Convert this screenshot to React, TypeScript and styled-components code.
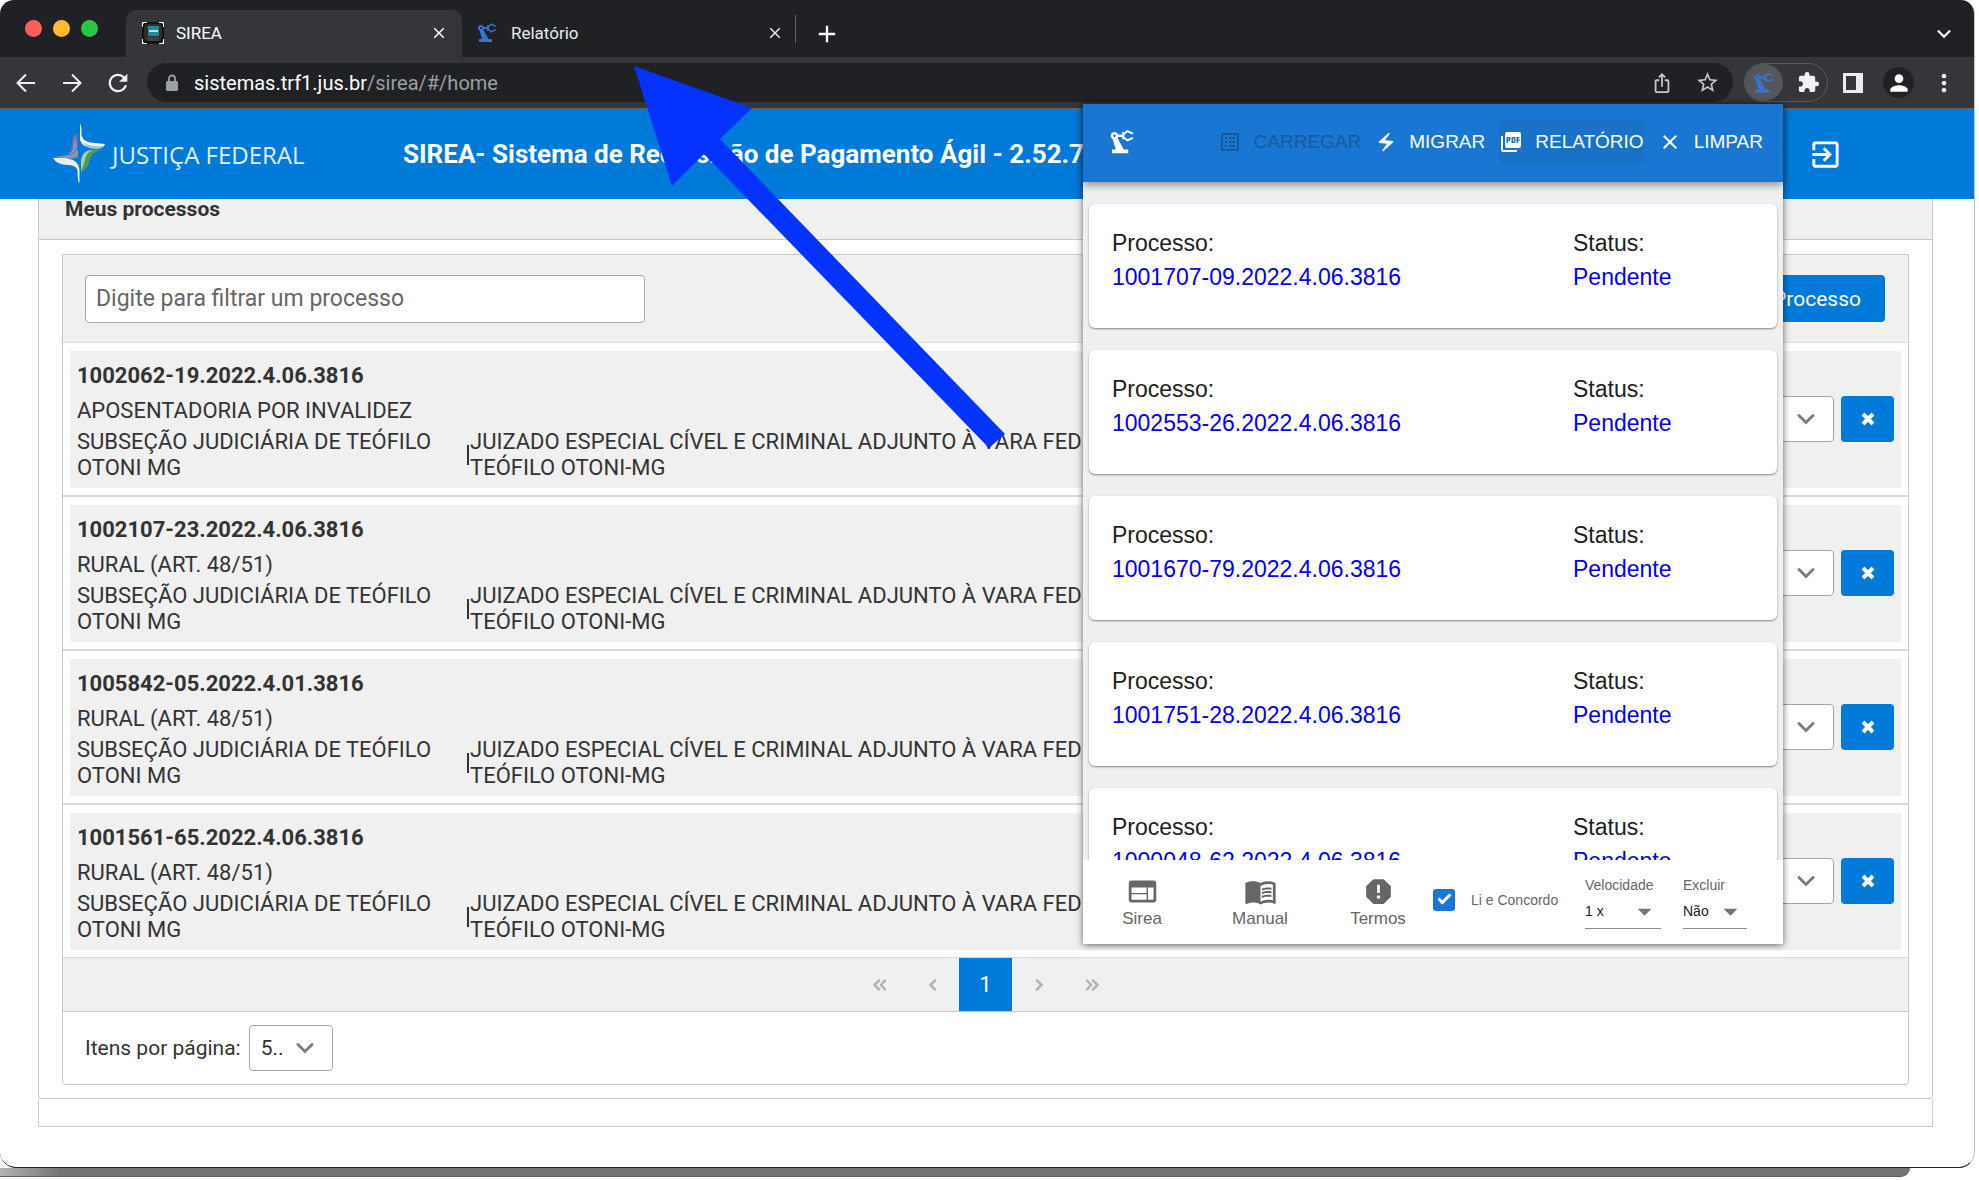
import React from "react";
import styled, { createGlobalStyle } from "styled-components";
import {
  MdRefresh,
  MdIosShare,
  MdStarBorder,
  MdPrecisionManufacturing,
  MdExtension,
  MdPerson,
  MdMoreVert,
  MdClose,
  MdAdd,
  MdExitToApp,
  MdListAlt,
  MdElectricBolt,
  MdPictureAsPdf,
  MdWeb,
  MdMenuBook,
  MdReport,
  MdArrowDropDown,
} from "react-icons/md";

const GlobalStyle = createGlobalStyle`
  *, *::before, *::after { box-sizing: border-box; }
  body { margin: 0; background: #fff; font-family: Roboto, "Liberation Sans", sans-serif; }
  button, input, select { font: inherit; color: inherit; margin: 0; }
  button { border: 0; padding: 0; background: none; cursor: pointer; }
  h1, h2, h3, p { margin: 0; font: inherit; }
  svg { display: block; flex: none; }
`;

/* ---------- browser window ---------- */

const Desktop = styled.div`
  overflow: hidden;
  padding-bottom: 4px;
`;

const Window = styled.div`
  position: relative;
  margin-right: 4px;
  border-right: 1px solid #c4c4c4;
  border-bottom: 1px solid #222;
  border-radius: 14px 14px 16px 16px;
  background: #fff;
  overflow: hidden;
`;

const WindowShadow = styled.div`
  height: 9px;
  margin-right: 69px;
  border-radius: 0 0 16px 0;
  background: linear-gradient(90deg, #b4b4b4 0, #747474 60px);
  border-bottom: 1px solid #5c5c5c;
`;

const TabStrip = styled.div`
  display: flex;
  align-items: flex-end;
  height: 57px;
  background: #202124;
  color: #fff;
`;

const TrafficLights = styled.div`
  display: flex;
  align-self: center;
  gap: 11px;
  width: 126px;
  padding-left: 25px;
`;

const Light = styled.span<{ $color: string }>`
  width: 17px;
  height: 17px;
  border-radius: 50%;
  background: ${(p) => p.$color};
`;

const Tab = styled.div<{ $active?: boolean }>`
  display: flex;
  align-items: center;
  gap: 12px;
  width: 336px;
  height: 47px;
  padding: 0 14px 1px ${(p) => (p.$active ? 16 : 13)}px;
  border-radius: 10px 10px 0 0;
  background: ${(p) => (p.$active ? "#35363a" : "transparent")};
  font-size: 17px;
  color: ${(p) => (p.$active ? "#fff" : "#e8eaed")};
`;

const TabTitle = styled.span`
  flex: 1;
`;

const TabDivider = styled.span`
  align-self: center;
  width: 1px;
  height: 28px;
  margin-left: -3px;
  background: #5f6165;
`;

const StripButton = styled.button<{ $push?: boolean }>`
  display: flex;
  align-items: center;
  justify-content: center;
  width: 34px;
  height: 47px;
  margin-left: ${(p) => (p.$push ? "auto" : "14px")};
  margin-right: 13px;
`;

const Toolbar = styled.div`
  display: flex;
  align-items: center;
  height: 52px;
  padding: 0 20px 0 9px;
  background: #35363a;
  border-bottom: 1px solid #626262;
  color: #f1f1f1;
`;

const NavButton = styled.button`
  display: flex;
  align-items: center;
  justify-content: center;
  width: 34px;
  height: 34px;
  margin-right: 12px;
`;

const Omnibox = styled.div`
  display: flex;
  flex: 1;
  align-items: center;
  gap: 8px;
  height: 39px;
  padding: 0 12px 0 16px;
  border-radius: 20px;
  background: #202124;
  color: #9aa0a6;
  font-size: 20px;
`;

const Url = styled.span`
  flex: 1;
  margin-left: 5px;
  b {
    font-weight: 400;
    color: #fff;
  }
`;

const OmniAction = styled.button`
  display: flex;
  justify-content: center;
  width: 28px;
  margin-left: 9px;
  color: #c4c6c9;
`;

const ExtensionPill = styled.div`
  display: flex;
  align-items: center;
  width: 84px;
  height: 39px;
  margin-left: 11px;
  border: 1px solid #5a5b5e;
  border-radius: 20px;
`;

const ExtensionActive = styled.button`
  display: flex;
  align-items: center;
  justify-content: center;
  width: 38px;
  height: 37px;
  margin-right: 14px;
  border-radius: 50%;
  background: #55565a;
  color: #3874cb;
`;

const BarButtons = styled.div`
  display: flex;
  align-items: center;
  gap: 20px;
  margin-left: 15px;
`;

const BarButton = styled.button`
  display: flex;
  align-items: center;
  justify-content: center;
  width: 20px;
  height: 31px;
`;

const Avatar = styled(BarButton)`
  width: 31px;
  border-radius: 50%;
  background: #202124;
  color: #fff;
`;

/* ---------- SIREA page ---------- */

const AppHeader = styled.header`
  display: flex;
  align-items: center;
  height: 90px;
  padding: 0 131px 0 53px;
  background: #007ad9;
  color: #fff;
`;

const Brand = styled.div`
  display: flex;
  align-items: center;
  gap: 7px;
  width: 350px;
  font-family: "Open Sans", "Noto Sans", sans-serif;
  font-size: 24px;
  white-space: nowrap;
  color: #e3effb;
`;

const AppTitle = styled.h1`
  flex: 1;
  font-size: 26px;
  font-weight: 700;
  white-space: nowrap;
`;

const Content = styled.main`
  padding: 0 41px 40px 38px;
  color: #333;
  font-size: 22px;
  line-height: 26px;
`;

const Panel = styled.section`
  padding-bottom: 13px;
  border: 1px solid #c8c8c8;
  border-top: 0;
  border-radius: 0 0 4px 4px;
`;

const PanelTitle = styled.h2`
  height: 41px;
  padding-left: 26px;
  border-bottom: 1px solid #c8c8c8;
  background: #f0f0f0;
  font-size: 21px;
  font-weight: 700;
  line-height: 20px;
`;

const DataView = styled.div`
  margin: 14px 23px 0;
  border: 1px solid #c8c8c8;
  border-radius: 0 0 4px 4px;
`;

const DataHeader = styled.div`
  display: flex;
  align-items: center;
  justify-content: space-between;
  height: 88px;
  padding: 0 23px 0 22px;
  border-bottom: 1px solid #dadde8;
  background: #f0f0f0;
`;

const FilterInput = styled.input`
  width: 560px;
  height: 48px;
  padding: 0 10px;
  border: 1px solid #a6a6a6;
  border-radius: 4px;
  background: #fff;
  font-size: 23px;
  &::placeholder {
    color: #666;
    opacity: 1;
  }
`;

const PrimaryButton = styled.button`
  height: 47px;
  padding: 0 24px;
  border-radius: 4px;
  background: #007ad9;
  color: #fff;
  font-size: 21px;
`;

const RowFrame = styled.div`
  padding: 8px 7px 7px;
  border-bottom: 1px solid #d6dae4;
  & + & {
    border-top: 1px solid #d6dae4;
  }
`;

const Row = styled.article`
  display: flex;
  align-items: center;
  justify-content: space-between;
  height: 137px;
  padding: 4px 7px 0;
  background: #f0f0f0;
`;

const RowNumber = styled.h3`
  font-weight: 700;
  margin-bottom: 9px;
`;

const RowSubject = styled.p`
  margin-bottom: 5px;
`;

const RowPlace = styled.div`
  display: flex;
  align-items: center;
`;

const Section = styled.p`
  width: 387px;
`;

const Bar = styled.span`
  width: 2px;
  height: 20px;
  margin: 0 1px 0 3px;
  background: #333;
`;

const Court = styled.p`
  width: 780px;
`;

const RowActions = styled.div`
  display: flex;
  gap: 7px;
  padding-bottom: 6px;
`;

const SelectBox = styled.div<{ $width: number }>`
  display: grid;
  align-items: center;
  width: ${(p) => p.$width}px;
  height: 46px;
  border: 1px solid #a6a6a6;
  border-radius: 4px;
  background: #fff;
  select,
  svg {
    grid-area: 1 / 1;
  }
  select {
    width: 100%;
    height: 100%;
    padding: 0 11px;
    border: 0;
    background: transparent;
    appearance: none;
  }
  svg {
    justify-self: end;
    margin-right: 18px;
    pointer-events: none;
  }
`;

const RemoveButton = styled(PrimaryButton)`
  display: flex;
  align-items: center;
  justify-content: center;
  width: 53px;
  height: 46px;
  padding: 0;
`;

const Paginator = styled.nav`
  display: flex;
  justify-content: center;
  height: 54px;
  border-bottom: 1px solid #c8c8c8;
  background: #f0f0f0;
`;

const PageButton = styled.button<{ $current?: boolean }>`
  display: flex;
  align-items: center;
  justify-content: center;
  width: 53px;
  background: ${(p) => (p.$current ? "#007ad9" : "transparent")};
  color: ${(p) => (p.$current ? "#fff" : "#b4b4b4")};
`;

const PageSize = styled.div`
  display: flex;
  align-items: center;
  gap: 8px;
  height: 72px;
  padding-left: 22px;
  font-size: 21px;
`;

const FooterStrip = styled.div`
  height: 28px;
  border: 1px solid #cfcfcf;
  border-top: 0;
`;

/* ---------- extension popup ---------- */

const Popup = styled.aside`
  position: absolute;
  top: 104px;
  right: 191px;
  display: flex;
  flex-direction: column;
  width: 700px;
  height: 840px;
  background: #efefef;
  box-shadow: 0 1px 7px rgba(0, 0, 0, 0.6);
  color: #212121;
  font-family: "Liberation Sans", Arial, sans-serif;
`;

const PopupBar = styled.div`
  z-index: 1;
  display: flex;
  align-items: center;
  flex: none;
  height: 78px;
  padding: 0 20px 2px 24px;
  background: #1976d2;
  box-shadow: 0 3px 8px rgba(0, 0, 0, 0.4);
  color: #fff;
`;

const PopupActions = styled.div`
  display: flex;
  gap: 14px;
  margin-left: auto;
`;

const PopupAction = styled.button<{ $hover?: boolean }>`
  display: flex;
  align-items: center;
  gap: 12px;
  height: 44px;
  border-radius: 6px;
  background: ${(p) => (p.$hover ? "#1a71c8" : "transparent")};
  font-size: 19px;
  &:disabled {
    color: #155a9e;
  }
`;

const PopupList = styled.div`
  flex: 1;
  overflow: hidden;
  padding: 22px 6px 0;
`;

const Card = styled.article`
  display: flex;
  height: 124px;
  margin-bottom: 22px;
  padding: 22px 23px;
  border-radius: 6px;
  background: #fff;
  box-shadow: 0 1px 2px rgba(0, 0, 0, 0.45);
  font-size: 23px;
  line-height: 34px;
`;

const CardField = styled.div<{ $width?: number }>`
  width: ${(p) => (p.$width ? p.$width + "px" : "auto")};
`;

const CardValue = styled.p`
  color: #0000f5;
`;

const PopupFooter = styled.div`
  display: flex;
  flex: none;
  height: 84px;
  background: #fff;
  color: #666;
  font-size: 14px;
`;

const FooterLink = styled.button`
  display: flex;
  flex-direction: column;
  align-items: center;
  width: 118px;
  padding-top: 15px;
  gap: 1px;
  font-size: 17px;
  line-height: 20px;
`;

const Agree = styled.label`
  display: flex;
  align-items: center;
  gap: 16px;
  width: 142px;
  margin-left: -4px;
  padding-bottom: 5px;
  white-space: nowrap;
`;

const AgreeBox = styled.input`
  appearance: none;
  display: grid;
  place-items: center;
  width: 22px;
  height: 22px;
  border-radius: 3px;
  background: #1976d2;
  &::after {
    content: "";
    width: 7px;
    height: 13px;
    margin-bottom: 4px;
    border: solid #fff;
    border-width: 0 3px 3px 0;
    rotate: 45deg;
  }
`;

const Field = styled.label<{ $width: number }>`
  display: flex;
  flex-direction: column;
  width: ${(p) => p.$width}px;
  margin: 17px 0 0 10px;
  & + & {
    margin-left: 22px;
  }
`;

const FieldSelect = styled.span`
  display: grid;
  align-items: center;
  height: 36px;
  padding-top: 1px;
  border-bottom: 1px solid #8c8c8c;
  color: #212121;
  select,
  svg {
    grid-area: 1 / 1;
  }
  select {
    padding: 0;
    border: 0;
    background: transparent;
    appearance: none;
  }
  svg {
    justify-self: end;
    color: #757575;
    pointer-events: none;
  }
`;

const Pointer = styled.svg`
  position: absolute;
  top: 66px;
  left: 634px;
  pointer-events: none;
`;

/* ---------- drawings ---------- */

const SireaFavicon = () => (
  <svg width="22" height="22" viewBox="0 0 22 22">
    <rect width="22" height="22" rx="1" fill="#fff" />
    <path d="M5 0h12v1h3l1 1v3h1v12h-1v3l-1 1h-3v1H5v-1H2l-1-1v-3H0V5h1V2l1-1h3z" fill="#111" />
    <rect x="2" y="2" width="18" height="17" rx="4" fill="#2b2d2f" />
    <rect x="6" y="4" width="11" height="10" rx="1" fill="#1d8f94" />
    <path d="M7 8h9v2H7z" fill="#b9e4e6" />
    <path d="M5 16h12M6 18h10" stroke="#55585a" />
  </svg>
);

const ArrowIcon = ({ right }: { right?: boolean }) => (
  <svg width="20" height="20" viewBox="0 0 20 20" fill="none" stroke="currentColor" strokeWidth="2">
    <g transform={right ? "rotate(180 10 10)" : undefined}>
      <path d="M19 10H2M10 1.500L1.500 10l8.500 8.500" />
    </g>
  </svg>
);

const LockIcon = () => (
  <svg width="18" height="18" viewBox="0 0 18 18">
    <rect x="3" y="7" width="12" height="10" rx="1.500" fill="currentColor" />
    <path d="M6 8V4.500a3 3 0 0 1 6 0V8" fill="none" stroke="currentColor" strokeWidth="1.800" />
  </svg>
);

const FederalStar = () => (
  <svg width="52" height="60" viewBox="0 0 52 60">
    <path d="M27 0q1.500 0 1.500 11 2 8 13.500 8l10 1q-1 4-8 4-14 1-17-8z" fill="#f4f8fc" />
    <path d="M30 18q4 5 21 4-2 3-8 3-10 0-13-7z" fill="#a9bfd6" />
    <path d="M25 9q-7 3-6.500 11 0 8-5.500 10 9 1 12-6z" fill="#5d6fb5" />
    <path d="M22 12q-2 8-2 12-1 5-5 6 8 0 9-8z" fill="#8a8fc6" />
    <path d="M3 32q10 0 16-2 4-2 6-5v8q-5 2-12 2z" fill="#8797a8" />
    <path d="M0 34q12-1 20 2 6 3 6.500 10v13q-2 0-2-13-2-5-10-5Q4 41 0 34z" fill="#e9edf1" />
    <path d="M50 26q-11 1-13 9-2 10-9 13V38q0-11 12-12z" fill="#4e9a56" />
    <path d="M40 26q-7 3-8 10l-4 12V37q1-11 12-11z" fill="#a6d3a0" />
  </svg>
);

const Chevron = ({ size = 18, color = "#7c7c7c", width = 3 }: { size?: number; color?: string; width?: number }) => (
  <svg width={size} height={size} viewBox="0 0 18 18" fill="none" stroke={color} strokeWidth={width} strokeLinecap="round">
    <path d="M2 5.500l7 7 7-7" />
  </svg>
);

const Angles = ({ double, left }: { double?: boolean; left?: boolean }) => (
  <svg width="14" height="12" viewBox="0 0 14 12" fill="none" stroke="currentColor" strokeWidth="2.500" strokeLinecap="round">
    <g transform={left ? "rotate(180 7 6)" : undefined}>
      {double ? <path d="M2 1.500L6 6 2 10.500M8 1.500L12.500 6 8 10.500" /> : <path d="M5 1.500L9.500 6 5 10.500" />}
    </g>
  </svg>
);

const Cross = () => (
  <svg width="14" height="14" viewBox="0 0 14 14" stroke="#fff" strokeWidth="4">
    <path d="M2 2l10 10M12 2L2 12" />
  </svg>
);

const SidePanelIcon = () => (
  <svg width="20" height="20" viewBox="0 0 20 20">
    <path d="M0 0h20v20H0zM3 3v14h10V3z" fill="#ececec" fillRule="evenodd" />
  </svg>
);

/* ---------- data ---------- */

const processes = [
  { number: "1002062-19.2022.4.06.3816", subject: "APOSENTADORIA POR INVALIDEZ" },
  { number: "1002107-23.2022.4.06.3816", subject: "RURAL (ART. 48/51)" },
  { number: "1005842-05.2022.4.01.3816", subject: "RURAL (ART. 48/51)" },
  { number: "1001561-65.2022.4.06.3816", subject: "RURAL (ART. 48/51)" },
];

const queue = [
  "1001707-09.2022.4.06.3816",
  "1002553-26.2022.4.06.3816",
  "1001670-79.2022.4.06.3816",
  "1001751-28.2022.4.06.3816",
  "1000048-62.2022.4.06.3816",
];

/* ---------- sections ---------- */

const BrowserChrome = () => (
  <>
    <TabStrip>
      <TrafficLights>
        <Light $color="#ff5f57" />
        <Light $color="#febc2e" />
        <Light $color="#28c840" />
      </TrafficLights>
      <Tab $active>
        <SireaFavicon />
        <TabTitle>SIREA</TabTitle>
        <button aria-label="Fechar SIREA"><MdClose size={18} /></button>
      </Tab>
      <Tab>
        <MdPrecisionManufacturing size={24} color="#3874cb" />
        <TabTitle>Relatório</TabTitle>
        <button aria-label="Fechar Relatório"><MdClose size={18} /></button>
      </Tab>
      <TabDivider />
      <StripButton aria-label="Nova guia"><MdAdd size={28} /></StripButton>
      <StripButton $push aria-label="Pesquisar guias"><Chevron size={14} color="#fff" /></StripButton>
    </TabStrip>
    <Toolbar>
      <NavButton aria-label="Voltar"><ArrowIcon /></NavButton>
      <NavButton aria-label="Avançar"><ArrowIcon right /></NavButton>
      <NavButton aria-label="Recarregar"><MdRefresh size={28} /></NavButton>
      <Omnibox>
        <LockIcon />
        <Url><b>sistemas.trf1.jus.br</b>/sirea/#/home</Url>
        <OmniAction aria-label="Compartilhar"><MdIosShare size={22} /></OmniAction>
        <OmniAction aria-label="Favoritar"><MdStarBorder size={25} /></OmniAction>
      </Omnibox>
      <ExtensionPill>
        <ExtensionActive aria-label="Extensão"><MdPrecisionManufacturing size={26} /></ExtensionActive>
        <MdExtension size={23} />
      </ExtensionPill>
      <BarButtons>
        <BarButton aria-label="Painel lateral"><SidePanelIcon /></BarButton>
        <Avatar aria-label="Perfil"><MdPerson size={26} /></Avatar>
        <BarButton aria-label="Menu"><MdMoreVert size={28} /></BarButton>
      </BarButtons>
    </Toolbar>
  </>
);

const ProcessRow = ({ number, subject }: { number: string; subject: string }) => (
  <RowFrame>
    <Row>
      <div>
        <RowNumber>{number}</RowNumber>
        <RowSubject>{subject}</RowSubject>
        <RowPlace>
          <Section>SUBSEÇÃO JUDICIÁRIA DE TEÓFILO OTONI MG</Section>
          <Bar />
          <Court>JUIZADO ESPECIAL CÍVEL E CRIMINAL ADJUNTO À VARA FEDERAL DE TEÓFILO OTONI-MG</Court>
        </RowPlace>
      </div>
      <RowActions>
        <SelectBox $width={160}>
          <select aria-label={"Ação para " + number}><option></option></select>
          <Chevron />
        </SelectBox>
        <RemoveButton aria-label={"Remover " + number}><Cross /></RemoveButton>
      </RowActions>
    </Row>
  </RowFrame>
);

const ExtensionPopup = () => (
  <Popup>
    <PopupBar>
      <MdPrecisionManufacturing size={30} />
      <PopupActions>
        <PopupAction disabled><MdListAlt size={24} />CARREGAR</PopupAction>
        <PopupAction><MdElectricBolt size={22} />MIGRAR</PopupAction>
        <PopupAction $hover><MdPictureAsPdf size={24} />RELATÓRIO</PopupAction>
        <PopupAction><MdClose size={24} />LIMPAR</PopupAction>
      </PopupActions>
    </PopupBar>
    <PopupList>
      {queue.map((number) => (
        <Card key={number}>
          <CardField $width={461}>
            <p>Processo:</p>
            <CardValue>{number}</CardValue>
          </CardField>
          <CardField>
            <p>Status:</p>
            <CardValue>Pendente</CardValue>
          </CardField>
        </Card>
      ))}
    </PopupList>
    <PopupFooter>
      <FooterLink><MdWeb size={33} />Sirea</FooterLink>
      <FooterLink><MdMenuBook size={33} />Manual</FooterLink>
      <FooterLink><MdReport size={33} />Termos</FooterLink>
      <Agree><AgreeBox type="checkbox" defaultChecked />Li e Concordo</Agree>
      <Field $width={76}>
        Velocidade
        <FieldSelect><select><option>1 x</option></select><MdArrowDropDown size={33} /></FieldSelect>
      </Field>
      <Field $width={64}>
        Excluir
        <FieldSelect><select><option>Não</option></select><MdArrowDropDown size={33} /></FieldSelect>
      </Field>
    </PopupFooter>
  </Popup>
);

export default function App() {
  return (
    <Desktop>
      <GlobalStyle />
      <Window>
        <BrowserChrome />
        <AppHeader>
          <Brand><FederalStar />JUSTIÇA FEDERAL</Brand>
          <AppTitle>SIREA- Sistema de Requisição de Pagamento Ágil - 2.52.7</AppTitle>
          <button aria-label="Sair"><MdExitToApp size={35} /></button>
        </AppHeader>
        <Content>
          <Panel>
            <PanelTitle>Meus processos</PanelTitle>
            <DataView>
              <DataHeader>
                <FilterInput aria-label="Filtrar processos" placeholder="Digite para filtrar um processo" />
                <PrimaryButton>Novo Processo</PrimaryButton>
              </DataHeader>
              {processes.map((p) => <ProcessRow key={p.number} {...p} />)}
              <Paginator aria-label="Paginação">
                <PageButton aria-label="Primeira página"><Angles double left /></PageButton>
                <PageButton aria-label="Página anterior"><Angles left /></PageButton>
                <PageButton $current>1</PageButton>
                <PageButton aria-label="Próxima página"><Angles /></PageButton>
                <PageButton aria-label="Última página"><Angles double /></PageButton>
              </Paginator>
              <PageSize>
                <label htmlFor="page-size">Itens por página:</label>
                <SelectBox $width={84}>
                  <select id="page-size"><option>5..</option></select>
                  <Chevron />
                </SelectBox>
              </PageSize>
            </DataView>
          </Panel>
          <FooterStrip />
        </Content>
        <ExtensionPopup />
        <Pointer width="372" height="383" viewBox="0 0 372 383" aria-hidden="true">
          <path d="M0 0L118 42 86 73 371 368 355 382 70 88 38 120z" fill="#0433ff" />
        </Pointer>
      </Window>
      <WindowShadow />
    </Desktop>
  );
}
